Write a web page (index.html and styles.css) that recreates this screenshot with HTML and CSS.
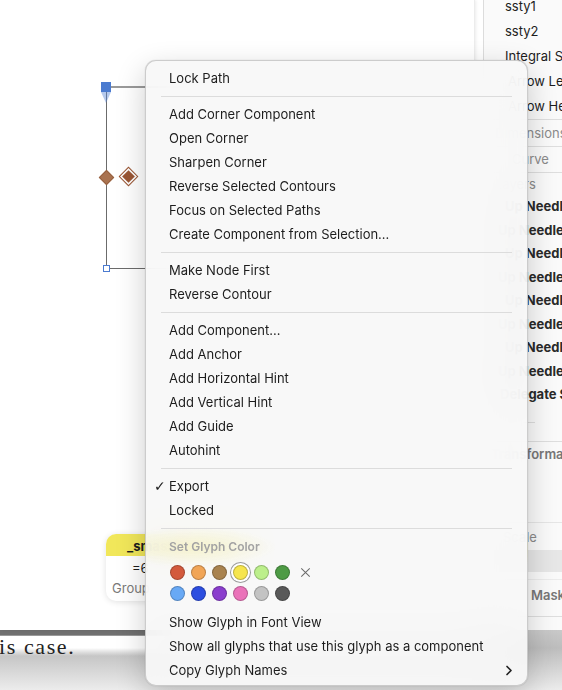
FILE: index.html
```html
<!DOCTYPE html>
<html lang="en">
<head>
    <meta charset="UTF-8">
    <meta name="viewport" content="width=device-width, initial-scale=1.0">
    <title>Glyph context menu</title>
    <link rel="stylesheet" href="styles.css">
</head>
<body>

    <div class="top">
        <!-- glyph canvas -->
        <div class="canvas">
            <div class="seg seg-top"></div>
            <div class="seg seg-left"></div>
            <div class="seg seg-bottom"></div>
            <div class="node-start"></div>
            <div class="node-dir"></div>
            <div class="anchor anchor-a"></div>
            <div class="anchor anchor-b"></div>
            <div class="node-end"></div>

            <div class="infobox">
                <div class="infobox-head">_smash</div>
                <div class="infobox-val">=6</div>
                <div class="infobox-grp">Group</div>
            </div>
        </div>
        <div class="gutter"></div>

        <!-- palette sidebar -->
        <div class="sidebar">
            <div class="srow">ssty1</div>
            <div class="srow">ssty2</div>
            <div class="srow">Integral Signs</div>
            <div class="srow shift">Arrow Length</div>
            <div class="srow shift">Arrow Heads</div>
            <div class="sline"></div>
            <div class="shead dim">Dimensions</div>
            <div class="sline"></div>
            <div class="shead curve">Curve</div>
            <div class="sline"></div>
            <div class="shead layers">Layers</div>
            <div class="needles">
                <div class="nrow in2">Up Needle</div>
                <div class="nrow in1">Up Needle</div>
                <div class="nrow in2">Up Needle</div>
                <div class="nrow in1">Up Needle</div>
                <div class="nrow in2">Up Needle</div>
                <div class="nrow in1">Up Needle</div>
                <div class="nrow in2">Up Needle</div>
                <div class="nrow in1">Up Needle</div>
                <div class="nrow in3">Delegate Set</div>
                <div class="nrow in3 clip">Anchors</div>
            </div>
            <div class="sline stub"></div>
            <div class="sline gap"></div>
            <div class="shead bold">Transformations</div>
            <div class="sblank"></div>
            <div class="shead scale">Scale</div>
            <div class="sband"></div>
            <div class="sline faint"></div>
            <div class="shead bold mask">Mask</div>
            <div class="sline"></div>
        </div>
    </div>

    <div class="bottom">
        <div class="doc">
            <div class="doc-bar"></div>
            <div class="doc-text">is case.</div>
        </div>
    </div>

    <!-- context menu -->
    <div class="menu">
        <div class="item">Lock Path</div>
        <div class="sep"></div>
        <div class="item">Add Corner Component</div>
        <div class="item">Open Corner</div>
        <div class="item">Sharpen Corner</div>
        <div class="item">Reverse Selected Contours</div>
        <div class="item">Focus on Selected Paths</div>
        <div class="item">Create Component from Selection…</div>
        <div class="sep"></div>
        <div class="item">Make Node First</div>
        <div class="item">Reverse Contour</div>
        <div class="sep"></div>
        <div class="item">Add Component…</div>
        <div class="item">Add Anchor</div>
        <div class="item">Add Horizontal Hint</div>
        <div class="item">Add Vertical Hint</div>
        <div class="item">Add Guide</div>
        <div class="item">Autohint</div>
        <div class="sep"></div>
        <div class="item checked">Export</div>
        <div class="item">Locked</div>
        <div class="sep"></div>
        <div class="menu-head">Set Glyph Color</div>
        <div class="swatches">
            <span class="dot c-red"></span>
            <span class="dot c-orange"></span>
            <span class="dot c-brown"></span>
            <span class="dot c-yellow selected"></span>
            <span class="dot c-lime"></span>
            <span class="dot c-green"></span>
            <span class="clear">
                <svg width="13" height="13" viewBox="0 0 13 13"><path d="M1.5 1.5 L11.5 11.5 M11.5 1.5 L1.5 11.5" stroke="#6a6a6a" stroke-width="1.2" fill="none"/></svg>
            </span>
            <span class="dot c-sky"></span>
            <span class="dot c-blue"></span>
            <span class="dot c-purple"></span>
            <span class="dot c-pink"></span>
            <span class="dot c-gray"></span>
            <span class="dot c-dark"></span>
        </div>
        <div class="item">Show Glyph in Font View</div>
        <div class="item">Show all glyphs that use this glyph as a component</div>
        <div class="item sub">Copy Glyph Names
            <svg class="chev" width="8" height="11" viewBox="0 0 8 11"><path d="M2 1.5 L6 5.5 L2 9.5" stroke="#222" stroke-width="1.7" fill="none" stroke-linecap="round" stroke-linejoin="round"/></svg>
        </div>
    </div>

</body>
</html>
```

FILE: styles.css
```css
html, body {
    margin: 0;
    padding: 0;
}

body {
    width: 562px;
    height: 690px;
    overflow: hidden;
    position: relative;
    background: #fff;
    font-family: 'Inter', 'Liberation Sans', sans-serif;
    font-size: 13px;
    color: #1d1d1d;
}

/* upper window: canvas + sidebar */
.top {
    display: flex;
    height: 630px;
}

.canvas {
    position: relative;
    width: 474px;
    background: #fff;
    box-shadow: 1px 0 3px rgba(0, 0, 0, 0.08);
    border-right: 1px solid #ececec;
}

.gutter {
    width: 8px;
    background: #fff;
}

.seg {
    position: absolute;
    background: #6b6b6b;
}
.seg-top {
    left: 106px;
    top: 86px;
    width: 80px;
    height: 2px;
    background: #9a9a9a;
}
.seg-left {
    left: 106px;
    top: 90px;
    width: 1px;
    height: 178px;
}
.seg-bottom {
    left: 106px;
    top: 268px;
    width: 80px;
    height: 1px;
}

.node-start {
    position: absolute;
    left: 101px;
    top: 82px;
    width: 10px;
    height: 10px;
    background: #4b7bd0;
}
.node-dir {
    position: absolute;
    left: 101px;
    top: 92px;
    width: 0;
    height: 0;
    border-left: 5px solid transparent;
    border-right: 5px solid transparent;
    border-top: 11px solid rgba(90, 135, 215, 0.45);
}
.node-end {
    position: absolute;
    left: 103px;
    top: 265px;
    width: 5px;
    height: 5px;
    background: #fff;
    border: 1px solid #4b7bd0;
}

.anchor {
    position: absolute;
    width: 9px;
    height: 9px;
    transform: rotate(45deg);
}
.anchor-a {
    left: 101px;
    top: 172px;
    background: #aa7350;
    border: 1px solid #96603f;
}
.anchor-b {
    left: 124px;
    top: 172px;
    background: #9a5533;
    box-shadow: 0 0 0 1.5px #fff, 0 0 0 2.5px #9a5533;
}

/* yellow glyph info bubble */
.infobox {
    position: absolute;
    left: 106px;
    top: 534px;
    width: 150px;
    height: 67px;
    background: #fff;
    border-radius: 10px;
    overflow: hidden;
    box-shadow: 0 1px 6px rgba(0, 0, 0, 0.12);
}
.infobox-head {
    height: 22px;
    line-height: 24px;
    background: #f1e75a;
    font-weight: 700;
    padding-left: 21px;
}
.infobox-val {
    height: 22px;
    line-height: 24px;
    padding-left: 26px;
}
.infobox-grp {
    line-height: 20px;
    padding-left: 6px;
    color: #7a7a7a;
}

/* sidebar */
.sidebar {
    flex: 1;
    background: #fafafa;
    border-left: 1px solid #dcdcdc;
    padding-left: 21px;
    overflow: hidden;
    white-space: nowrap;
}

.srow {
    height: 25px;
    line-height: 25px;
}
.srow:first-child {
    margin-top: -6px;
}
.srow.shift {
    text-indent: 3px;
}

.sline {
    height: 1px;
    background: #dedede;
    margin-left: -21px;
}
.sline.stub {
    margin: 7px 0 0 18px;
    width: 12px;
}
.sline.gap {
    margin-top: 18px;
}
.sline.faint {
    background: #ececec;
    margin-top: 7px;
}

.shead {
    height: 26px;
    line-height: 26px;
    color: #8a8a8a;
}
.shead.dim {
    text-indent: -10px;
}
.shead.curve {
    text-indent: 7px;
    height: 25px;
    line-height: 25px;
}
.shead.layers {
    height: 22px;
    line-height: 22px;
    text-indent: -10px;
}
.shead.bold {
    font-weight: 600;
    color: #777;
    height: 24px;
    line-height: 24px;
    text-indent: -14px;
}
.shead.scale {
    text-indent: -2px;
    height: 27px;
    line-height: 28px;
}
.shead.bold.mask {
    text-indent: 26px;
    height: 36px;
    line-height: 30px;
}

.needles {
    font-weight: 700;
    color: #2a2a2a;
}
.nrow {
    height: 23.5px;
    line-height: 23.5px;
}
.nrow.in1 { text-indent: -7px; }
.nrow.in2 { text-indent: 0; }
.nrow.in3 { text-indent: -5px; }
.nrow.clip {
    height: 8px;
    line-height: 26px;
    overflow: hidden;
}

.sblank {
    height: 56px;
    margin-left: -21px;
    border-bottom: 1px solid #e6e6e6;
}
.sband {
    height: 22px;
    margin-left: -21px;
    background: #e7e7e7;
}

/* lower document window */
.bottom {
    height: 60px;
    background: linear-gradient(#c9c9c9, #bdbdbd 30%, #ececec);
}
.doc {
    width: 483px;
}
.doc-bar {
    height: 5px;
    background: #707070;
    border-bottom: 1px solid #9a9a9a;
}
.doc-text {
    height: 20px;
    line-height: 21px;
    background: linear-gradient(#fff 60%, rgba(255, 255, 255, 0));
    font-family: 'Liberation Serif', serif;
    font-size: 22px;
    letter-spacing: 1.6px;
    color: #222;
    margin-left: -1px;
}

/* context menu */
.menu {
    position: absolute;
    left: 145px;
    top: 60px;
    width: 383px;
    height: 626px;
    box-sizing: border-box;
    padding-top: 5px;
    /* glow of the yellow bubble seen through the menu */
    background:
        radial-gradient(ellipse 85px 20px at 45px 486px, rgba(240, 230, 110, 0.28), rgba(240, 230, 110, 0)),
        rgba(247, 247, 247, 0.92);
    -webkit-backdrop-filter: blur(20px);
    backdrop-filter: blur(20px);
    border: 0.5px solid rgba(0, 0, 0, 0.18);
    border-radius: 11px;
    box-shadow: 0 10px 30px rgba(0, 0, 0, 0.2), 0 0 1px rgba(0, 0, 0, 0.3);
}

.item {
    position: relative;
    height: 24px;
    line-height: 24px;
    padding-left: 23px;
    white-space: nowrap;
}

.item.checked::before {
    content: "✓";
    position: absolute;
    left: 8px;
    top: 0;
    font-size: 14px;
    font-family: 'DejaVu Sans', sans-serif;
}

.item .chev {
    position: absolute;
    right: 14px;
    top: 7px;
}

.sep {
    height: 1px;
    margin: 6px 15px 5px;
    background: #dcdcdc;
}

.menu-head {
    height: 25px;
    line-height: 25px;
    padding-left: 23px;
    font-size: 12px;
    font-weight: 600;
    color: #a3a3a3;
}

.swatches {
    display: grid;
    grid-template-columns: repeat(7, 15px);
    grid-auto-rows: 15px;
    column-gap: 6px;
    row-gap: 6px;
    padding: 6px 0 9px 24px;
}

.dot {
    width: 15px;
    height: 15px;
    box-sizing: border-box;
    border-radius: 50%;
    border: 1px solid rgba(0, 0, 0, 0.22);
}
.dot.selected {
    box-shadow: 0 0 0 2px #fff, 0 0 0 3px #9a9a9a;
}

.clear {
    display: flex;
    align-items: center;
    justify-content: center;
    margin-left: 4px;
}

.c-red    { background: #d35a3c; }
.c-orange { background: #f1a556; }
.c-brown  { background: #a9834f; }
.c-yellow { background: #f6e54d; }
.c-lime   { background: #bcef8b; }
.c-green  { background: #4e9b45; }
.c-sky    { background: #68a9f5; }
.c-blue   { background: #2c4ee0; }
.c-purple { background: #8a3ecd; }
.c-pink   { background: #ea72b9; }
.c-gray   { background: #c3c3c3; }
.c-dark   { background: #595959; }
```
